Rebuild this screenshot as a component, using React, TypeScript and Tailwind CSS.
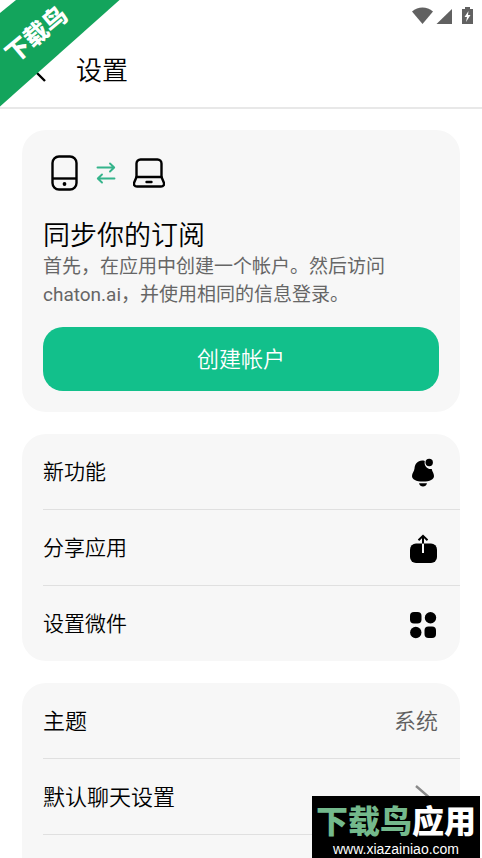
import type { ReactNode } from "react";

function StatusIcons() {
  return (
    <svg width="62" height="18" viewBox="0 0 62 18" fill="#616161" aria-hidden="true">
      <path d="M0 4.500C6-1 15-1 21 4.500L10.500 17Z" />
      <path d="M40 2V17H24.500Z" />
      <path fillRule="evenodd" d="M50 2h3V0h5v2h3v15H50ZM56.500 4l-4 6h2.500l-1 5 4.500-7H56Z" />
    </svg>
  );
}

function PhoneIcon() {
  return (
    <svg width="28" height="36" viewBox="0 0 28 36" fill="none" stroke="#000" strokeWidth="2.400" aria-hidden="true">
      <rect x="1.500" y="1.500" width="24" height="33" rx="6.500" />
      <path d="M1.500 23.500H25.500" />
      <circle cx="13.500" cy="29" r="1.900" fill="#000" stroke="none" />
    </svg>
  );
}

function SyncIcon() {
  return (
    <svg width="20" height="22" viewBox="0 0 20 22" fill="none" stroke="#35b48b" strokeWidth="1.900" strokeLinecap="round" strokeLinejoin="round" aria-hidden="true">
      <path d="M1.500 5.500H18M14 1.500l4.200 4L14 9.500M18.500 16.500H2M6 12.500l-4.200 4L6 20.500" />
    </svg>
  );
}

function LaptopIcon() {
  return (
    <svg width="32" height="30" viewBox="0 0 32 30" fill="none" stroke="#000" strokeWidth="2.400" strokeLinejoin="round" aria-hidden="true">
      <path d="M3.500 19V5.500a4 4 0 0 1 4-4h17a4 4 0 0 1 4 4V19" />
      <path d="M3.500 19h25l2.300 5.500c.7 2.200-.3 4-2.800 4H4c-2.500 0-3.500-1.800-2.800-4Z" />
      <path d="M13.500 24h5" strokeLinecap="round" />
    </svg>
  );
}

function BellIcon() {
  return (
    <svg width="30" height="30" viewBox="0 0 30 30" aria-hidden="true">
      <path d="M16.800 2.900C10.500 1.300 6.800 5.500 6.500 10.500c-.2 3.200-2.500 4.300-2.500 7.500C4 21.500 8 23.500 15 23.500S26 21.500 26 18c0-2.800-1.700-4-2.300-7-4 .6-8.100-3.100-6.900-8.100Z" />
      <circle cx="21.200" cy="4.500" r="3.700" />
      <path d="M11 25.200h8c-.6 2.200-2 3.300-4 3.300s-3.400-1.100-4-3.300Z" />
    </svg>
  );
}

function ShareIcon() {
  return (
    <svg width="30" height="30" viewBox="0 0 30 30" fill="none" aria-hidden="true">
      <rect x="2" y="9.500" width="27" height="19.500" rx="6" fill="#000" />
      <path d="M15 9.500V19" stroke="#f7f7f7" strokeWidth="2" />
      <path d="M15 9.500V2M10.500 6.200 15 1.800l4.500 4.400" stroke="#000" strokeWidth="2" />
    </svg>
  );
}

function WidgetIcon() {
  return (
    <svg width="30" height="30" viewBox="0 0 30 30" aria-hidden="true">
      <rect x="2" y="2" width="11.500" height="11.500" rx="4" />
      <circle cx="22.500" cy="7.800" r="5.700" />
      <circle cx="7.800" cy="22.500" r="5.700" />
      <rect x="16.500" y="16.500" width="11.500" height="11.500" rx="4" />
    </svg>
  );
}

function ChevronIcon() {
  return (
    <svg width="30" height="30" viewBox="0 0 30 30" fill="none" stroke="#8a8a8a" strokeWidth="2.400" aria-hidden="true">
      <path d="M8 3 22.500 15.500 8 28" />
    </svg>
  );
}

const actions = [
  { title: "新功能", icon: <BellIcon /> },
  { title: "分享应用", icon: <ShareIcon /> },
  { title: "设置微件", icon: <WidgetIcon /> },
];

const preferences = [
  { title: "主题", icon: <span className="text-[#606060]">系统</span> },
  { title: "默认聊天设置", icon: <ChevronIcon /> },
];

function Row({ title, children, divided }: { title: string; children: ReactNode; divided: boolean }) {
  return (
    <li className={divided ? "border-b border-[#e0e0e0]" : ""}>
      <button type="button" className="flex h-[75px] w-full items-center justify-between pt-0.5 pr-[22px]">
        <span>{title}</span>
        {children}
      </button>
    </li>
  );
}

function Ribbon() {
  return (
    <svg className="absolute top-0 left-0" width="120" height="107" viewBox="0 0 120 107">
      <path d="M16 0H119.500L0 106.500V13Z" fill="#13a45c" />
      <text x="36" y="43" fill="#fff" fontSize="24" fontWeight="900" textAnchor="middle" transform="rotate(-40 36 34)">
        下载鸟
      </text>
    </svg>
  );
}

function SiteBadge() {
  return (
    <div className="absolute right-0.5 bottom-0 flex h-[62px] w-[168px] flex-col items-center bg-black pt-2 whitespace-nowrap">
      <p className="text-[32px] leading-9 font-black text-white">
        <span className="text-[#74b98c]">下载鸟</span>应用
      </p>
      <p className="font-['Liberation_Sans',sans-serif] text-sm leading-[18px] text-white">www.xiazainiao.com</p>
    </div>
  );
}

export default function App() {
  return (
    <div className="relative h-screen overflow-hidden bg-white font-['Roboto','Noto_Sans_CJK_SC',sans-serif] font-[350] text-black">
      <div className="flex h-8 items-center justify-end pr-2">
        <StatusIcons />
      </div>
      <header className="flex h-[77px] items-center gap-[30px] border-b-2 border-[#e8e8e8] pt-0.5 pl-8">
        <button type="button" aria-label="返回">
          <svg width="14" height="24" viewBox="0 0 14 24" fill="none" stroke="#000" strokeWidth="2.400">
            <path d="M13 2 3 12l10 10" />
          </svg>
        </button>
        <h1 className="text-[26px] leading-8">设置</h1>
      </header>

      <main className="flex flex-col gap-[22px] px-[22px] pt-[21px]">
        <section className="rounded-3xl bg-[#f7f7f7] px-[21px] pt-[25px] pb-[21px]">
          <div className="flex h-9 items-center gap-[17px] pl-2">
            <PhoneIcon />
            <SyncIcon />
            <LaptopIcon />
          </div>
          <h2 className="mt-7 text-[27px] leading-[34px]">同步你的订阅</h2>
          <p className="text-[19px] leading-7 font-normal text-[#666]">首先，在应用中创建一个帐户。然后访问chaton.ai，并使用相同的信息登录。</p>
          <button type="button" className="mt-[18px] h-16 w-full rounded-[20px] bg-[#12c08b] text-[22px] text-white">
            创建帐户
          </button>
        </section>

        <ul className="rounded-3xl bg-[#f7f7f7] pl-[21px] text-[21px]">
          {actions.map((item, i) => (
            <Row key={item.title} title={item.title} divided={i < actions.length - 1}>
              {item.icon}
            </Row>
          ))}
        </ul>

        <ul className="rounded-t-3xl bg-[#f7f7f7] pb-6 pl-[21px] text-[22px]">
          {preferences.map((item) => (
            <Row key={item.title} title={item.title} divided>
              {item.icon}
            </Row>
          ))}
        </ul>
      </main>

      <Ribbon />
      <SiteBadge />
    </div>
  );
}
